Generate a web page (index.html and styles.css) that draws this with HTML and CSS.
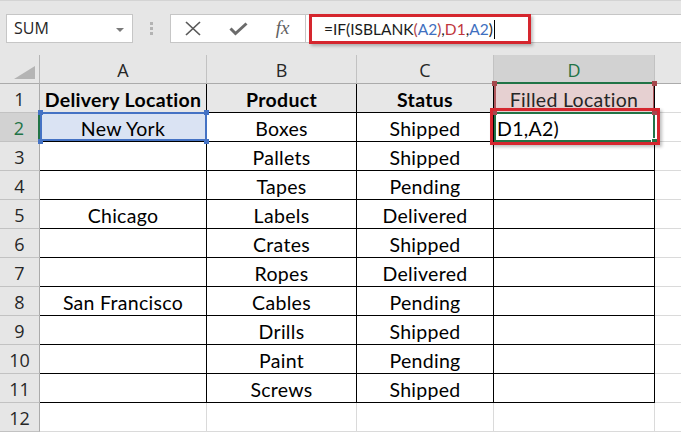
FILE: index.html
```html
<!DOCTYPE html>
<html lang="en">
<head>
  <meta charset="UTF-8">
  <meta name="viewport" content="width=device-width, initial-scale=1.0">
  <title>ISBLANK fill</title>
  <link rel="stylesheet" href="styles.css">
</head>
<body>

<!-- Barra della formula -->
<div class="toolbar">
  <div class="namebox">SUM<span class="caret"></span></div>
  <div class="grip"><i></i><i></i><i></i></div>
  <div class="fx-buttons">
    <span class="fx-btn">
      <svg width="16" height="15" viewBox="0 0 16 15"><path d="M1 1 L15 14 M15 1 L1 14" stroke="#595959" stroke-width="1.7" fill="none"/></svg>
    </span>
    <span class="fx-btn">
      <svg width="19" height="14" viewBox="0 0 19 14"><path d="M1.5 6.5 L6.5 11.5 L17.5 1.5" stroke="#6b6b6b" stroke-width="3" fill="none"/></svg>
    </span>
    <span class="fx-btn fx">fx</span>
  </div>
  <div class="formula">
    <div class="formula-box">
      <span>=IF(ISBLANK</span><span class="ref-r">(</span><span class="ref-b">A2</span><span class="ref-r">)</span><span>,</span><span class="ref-d">D1</span><span>,</span><span class="ref-b">A2</span><span>)</span><span class="cursor"></span>
    </div>
  </div>
</div>

<!-- Foglio -->
<div class="sheet">
  <div class="corner"><span class="tri"></span></div>
  <div class="col-head">A</div>
  <div class="col-head">B</div>
  <div class="col-head">C</div>
  <div class="col-head active">D</div>
  <div class="col-head last"></div>

  <div class="row-head">1</div>
  <div class="cell tb head">Delivery Location</div>
  <div class="cell tb head">Product</div>
  <div class="cell tb head">Status</div>
  <div class="cell tb d1">Filled Location
    <span class="hd tl"></span><span class="hd tr"></span><span class="hd bl"></span><span class="hd br"></span>
  </div>
  <div class="cell grid last"></div>

  <div class="row-head active">2</div>
  <div class="cell tb a2">New York
    <span class="a2-frame"></span>
    <span class="hb tl"></span><span class="hb tr"></span><span class="hb bl"></span><span class="hb br"></span>
  </div>
  <div class="cell tb">Boxes</div>
  <div class="cell tb">Shipped</div>
  <div class="cell tb d2">D1,A2)
    <span class="d2-frame"></span>
    <span class="fill-handle"></span>
    <span class="red-box"></span>
  </div>
  <div class="cell grid last"></div>

  <div class="row-head">3</div>
  <div class="cell tb"></div>
  <div class="cell tb">Pallets</div>
  <div class="cell tb">Shipped</div>
  <div class="cell tb"></div>
  <div class="cell grid last"></div>

  <div class="row-head">4</div>
  <div class="cell tb"></div>
  <div class="cell tb">Tapes</div>
  <div class="cell tb">Pending</div>
  <div class="cell tb"></div>
  <div class="cell grid last"></div>

  <div class="row-head">5</div>
  <div class="cell tb">Chicago</div>
  <div class="cell tb">Labels</div>
  <div class="cell tb">Delivered</div>
  <div class="cell tb"></div>
  <div class="cell grid last"></div>

  <div class="row-head">6</div>
  <div class="cell tb"></div>
  <div class="cell tb">Crates</div>
  <div class="cell tb">Shipped</div>
  <div class="cell tb"></div>
  <div class="cell grid last"></div>

  <div class="row-head">7</div>
  <div class="cell tb"></div>
  <div class="cell tb">Ropes</div>
  <div class="cell tb">Delivered</div>
  <div class="cell tb"></div>
  <div class="cell grid last"></div>

  <div class="row-head">8</div>
  <div class="cell tb">San Francisco</div>
  <div class="cell tb">Cables</div>
  <div class="cell tb">Pending</div>
  <div class="cell tb"></div>
  <div class="cell grid last"></div>

  <div class="row-head">9</div>
  <div class="cell tb"></div>
  <div class="cell tb">Drills</div>
  <div class="cell tb">Shipped</div>
  <div class="cell tb"></div>
  <div class="cell grid last"></div>

  <div class="row-head">10</div>
  <div class="cell tb"></div>
  <div class="cell tb">Paint</div>
  <div class="cell tb">Pending</div>
  <div class="cell tb"></div>
  <div class="cell grid last"></div>

  <div class="row-head">11</div>
  <div class="cell tb"></div>
  <div class="cell tb">Screws</div>
  <div class="cell tb">Shipped</div>
  <div class="cell tb"></div>
  <div class="cell grid last"></div>

  <div class="row-head">12</div>
  <div class="cell grid"></div>
  <div class="cell grid"></div>
  <div class="cell grid"></div>
  <div class="cell grid"></div>
  <div class="cell grid last"></div>
</div>

</body>
</html>
```

FILE: styles.css
```css
body {
  margin: 0;
  width: 681px;
  height: 433px;
  overflow: hidden;
  background-color: #fff;
  font-family: 'Open Sans', 'Noto Sans', sans-serif;
}

/* Barra superiore */
.toolbar {
  height: 55px;
  box-sizing: border-box;
  padding-top: 13px;
  border-top: 1px solid #d4d4d4;
  background-color: #e6e6e6;
  display: flex;
  align-items: flex-start;
}

.namebox {
  position: relative;
  margin-left: 6px;
  width: 127px;
  height: 29px;
  box-sizing: border-box;
  padding-left: 7px;
  border: 1px solid #c6c6c6;
  background-color: #fff;
  font-size: 16px;
  line-height: 27px;
  color: #262626;
}

.caret {
  position: absolute;
  right: 8px;
  top: 13px;
  border-left: 4px solid transparent;
  border-right: 4px solid transparent;
  border-top: 4px solid #7a7a7a;
}

.grip {
  width: 37px;
  height: 29px;
  display: flex;
  flex-direction: column;
  align-items: center;
  justify-content: center;
  gap: 2px;
}

.grip i {
  width: 3px;
  height: 3px;
  background-color: #b3b3b3;
}

.fx-buttons {
  width: 136px;
  height: 29px;
  box-sizing: border-box;
  border: 1px solid #c6c6c6;
  background-color: #fff;
  display: flex;
}

.fx-btn {
  width: 45px;
  display: flex;
  align-items: center;
  justify-content: center;
}

.fx {
  font-family: 'Liberation Serif', serif;
  font-style: italic;
  font-size: 19px;
  color: #5f5f5f;
  padding-bottom: 2px;
}

.formula {
  flex: 1;
  height: 29px;
  box-sizing: border-box;
  border-top: 1px solid #c6c6c6;
  border-bottom: 1px solid #c6c6c6;
  background-color: #fff;
  display: flex;
  padding-left: 3px;
}

.formula-box {
  width: 222px;
  height: 30px;
  margin-top: -1px;
  box-sizing: border-box;
  border: 3px solid #d5262e;
  box-shadow: 2px 2px 3px rgba(0, 0, 0, 0.25);
  padding-left: 12px;
  display: flex;
  align-items: center;
  font-family: 'Lato', sans-serif;
  font-size: 15.5px;
  color: #1a1a1a;
}

.ref-b { color: #3f6fc0; }
.ref-r { color: #b0444a; }
.ref-d { color: #c0363c; }

.cursor {
  width: 1px;
  height: 19px;
  margin-left: 1px;
  background-color: #000;
}

/* Griglia del foglio */
.sheet {
  display: grid;
  grid-template-columns: 40px 167px 150px 137px 161px 26px;
  grid-template-rows: repeat(13, 29px);
}

.corner {
  position: relative;
  background-color: #e6e6e6;
  border-right: 1px solid #b5b5b5;
  border-bottom: 1px solid #ababab;
}

.tri {
  position: absolute;
  right: 4px;
  bottom: 4px;
  width: 0;
  height: 0;
  border-left: 21px solid transparent;
  border-bottom: 13px solid #b4b4b4;
}

.col-head {
  background-color: #e6e6e6;
  border-right: 1px solid #c2c2c2;
  border-bottom: 1px solid #ababab;
  font-size: 18px;
  color: #262626;
  display: flex;
  align-items: center;
  justify-content: center;
  padding-top: 2px;
}

.col-head.active {
  background-color: #d2d2d2;
  color: #217346;
  border-bottom: 2px solid #217346;
}

.col-head.last {
  border-right: none;
}

.row-head {
  background-color: #e6e6e6;
  border-right: 1px solid #ababab;
  border-bottom: 1px solid #c2c2c2;
  font-size: 18px;
  color: #262626;
  display: flex;
  align-items: center;
  justify-content: center;
  padding-top: 1px;
}

.row-head.active {
  background-color: #d2d2d2;
  color: #217346;
  border-right: 2px solid #217346;
}

.cell {
  position: relative;
  box-sizing: border-box;
  font-family: 'Lato', sans-serif;
  font-size: 19.5px;
  letter-spacing: 0.3px;
  color: #000;
  display: flex;
  align-items: center;
  justify-content: center;
  padding-top: 2px;
  white-space: nowrap;
}

.cell.tb {
  border-right: 1px solid #000;
  border-bottom: 1px solid #000;
}

.cell.grid {
  border-right: 1px solid #dadada;
  border-bottom: 1px solid #dadada;
}

.cell.last {
  border-right: none;
}

.cell.head {
  background-color: #e7e7e7;
  font-weight: bold;
}

/* Riferimenti della formula */
.a2 {
  background-color: #dae3f3;
}

.a2-frame {
  position: absolute;
  left: 0;
  top: -1px;
  right: -1px;
  bottom: 0;
  border: 2px solid #4472c4;
  z-index: 2;
}

.hb, .hd {
  position: absolute;
  width: 5px;
  height: 5px;
  z-index: 3;
}

.hb { background-color: #4472c4; }
.hd { background-color: #a5474c; }

.tl { left: -2px; top: -3px; }
.tr { right: -3px; top: -3px; }
.bl { left: -2px; bottom: -3px; }
.br { right: -3px; bottom: -3px; }

.d1 {
  background-color: #e6d0d1;
  box-shadow: inset 2px 0 0 #b0575c, inset -1px 0 0 #b0575c;
  color: #262626;
}

.d2 {
  justify-content: flex-start;
  padding-left: 3px;
}

.d2-frame {
  position: absolute;
  left: 0;
  top: -1px;
  right: -1px;
  bottom: -1px;
  border: 2px solid #217346;
  z-index: 2;
}

.fill-handle {
  position: absolute;
  right: -4px;
  bottom: -4px;
  width: 5px;
  height: 5px;
  background-color: #217346;
  border: 1px solid #fff;
  z-index: 3;
}

.red-box {
  position: absolute;
  left: -4px;
  top: -5px;
  right: -6px;
  bottom: -4px;
  border: 3px solid #d5262e;
  box-shadow: 2px 2px 3px rgba(0, 0, 0, 0.25);
  z-index: 4;
}
```
